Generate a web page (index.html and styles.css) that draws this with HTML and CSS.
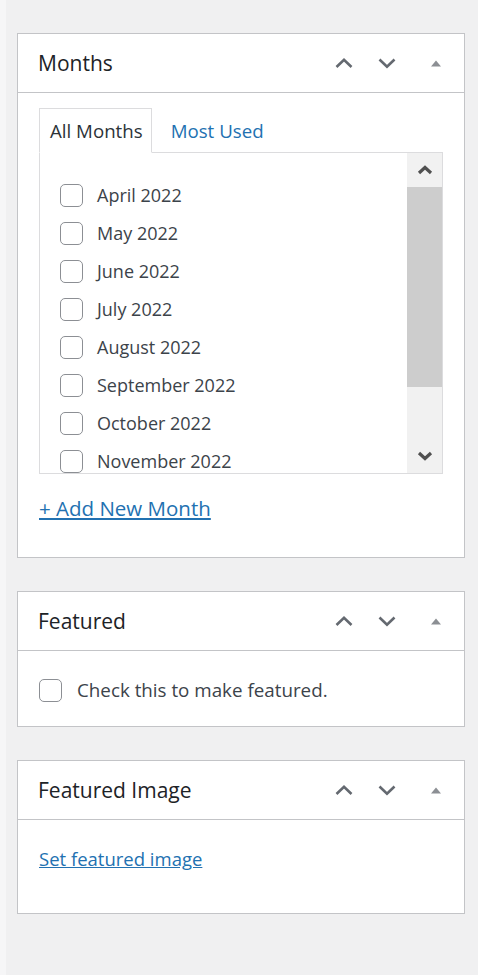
FILE: index.html
```html
<!DOCTYPE html>
<html lang="en">
<head>
<meta charset="utf-8">
<title>Edit Post – Sidebar</title>
<link rel="stylesheet" href="styles.css">
</head>
<body>
<div class="sidebar">

  <section class="postbox">
    <div class="postbox-header">
      <h2 class="hndle">Months</h2>
      <div class="handle-actions">
        <button class="handle-btn" type="button" aria-label="Move up">
          <svg class="chev" viewBox="0 0 20 12" width="20" height="12"><polyline points="2.5,10 10,2.8 17.5,10"/></svg>
        </button>
        <button class="handle-btn" type="button" aria-label="Move down">
          <svg class="chev" viewBox="0 0 20 12" width="20" height="12"><polyline points="2.5,2.5 10,9.7 17.5,2.5"/></svg>
        </button>
        <button class="handle-btn toggle" type="button" aria-label="Toggle panel">
          <svg class="tri" viewBox="0 0 12 8" width="12" height="8"><polygon points="1,7.5 6,1.5 11,7.5"/></svg>
        </button>
      </div>
    </div>
    <div class="inside">
      <ul class="tabs">
        <li class="tab active">All Months</li>
        <li class="tab"><a href="#">Most Used</a></li>
      </ul>
      <div class="tab-panel">
        <ul class="checklist">
          <li><label><input type="checkbox"><span>April 2022</span></label></li>
          <li><label><input type="checkbox"><span>May 2022</span></label></li>
          <li><label><input type="checkbox"><span>June 2022</span></label></li>
          <li><label><input type="checkbox"><span>July 2022</span></label></li>
          <li><label><input type="checkbox"><span>August 2022</span></label></li>
          <li><label><input type="checkbox"><span>September 2022</span></label></li>
          <li><label><input type="checkbox"><span>October 2022</span></label></li>
          <li><label><input type="checkbox"><span>November 2022</span></label></li>
        </ul>
        <div class="scrollbar" aria-hidden="true">
          <span class="sb-btn"><svg viewBox="0 0 16 10" width="16" height="10"><polyline points="2,8 8,2.5 14,8"/></svg></span>
          <span class="sb-thumb"></span>
          <span class="sb-track"></span>
          <span class="sb-btn"><svg viewBox="0 0 16 10" width="16" height="10"><polyline points="2,2 8,7.5 14,2"/></svg></span>
        </div>
      </div>
      <p class="add-row"><a href="#">+ Add New Month</a></p>
    </div>
  </section>

  <section class="postbox">
    <div class="postbox-header">
      <h2 class="hndle">Featured</h2>
      <div class="handle-actions">
        <button class="handle-btn" type="button" aria-label="Move up">
          <svg class="chev" viewBox="0 0 20 12" width="20" height="12"><polyline points="2.5,10 10,2.8 17.5,10"/></svg>
        </button>
        <button class="handle-btn" type="button" aria-label="Move down">
          <svg class="chev" viewBox="0 0 20 12" width="20" height="12"><polyline points="2.5,2.5 10,9.7 17.5,2.5"/></svg>
        </button>
        <button class="handle-btn toggle" type="button" aria-label="Toggle panel">
          <svg class="tri" viewBox="0 0 12 8" width="12" height="8"><polygon points="1,7.5 6,1.5 11,7.5"/></svg>
        </button>
      </div>
    </div>
    <div class="inside featured-inside">
      <label class="featured-row"><input type="checkbox"><span>Check this to make featured.</span></label>
    </div>
  </section>

  <section class="postbox">
    <div class="postbox-header">
      <h2 class="hndle">Featured Image</h2>
      <div class="handle-actions">
        <button class="handle-btn" type="button" aria-label="Move up">
          <svg class="chev" viewBox="0 0 20 12" width="20" height="12"><polyline points="2.5,10 10,2.8 17.5,10"/></svg>
        </button>
        <button class="handle-btn" type="button" aria-label="Move down">
          <svg class="chev" viewBox="0 0 20 12" width="20" height="12"><polyline points="2.5,2.5 10,9.7 17.5,2.5"/></svg>
        </button>
        <button class="handle-btn toggle" type="button" aria-label="Toggle panel">
          <svg class="tri" viewBox="0 0 12 8" width="12" height="8"><polygon points="1,7.5 6,1.5 11,7.5"/></svg>
        </button>
      </div>
    </div>
    <div class="inside image-inside">
      <p class="image-row"><a href="#">Set featured image</a></p>
    </div>
  </section>

</div>
</body>
</html>
```

FILE: styles.css
```css
* {
  box-sizing: border-box;
}

html,
body {
  margin: 0;
  padding: 0;
}

body {
  background: #f0f0f1;
  font-family: "Open Sans", "Noto Sans", "DejaVu Sans", sans-serif;
  color: #3c434a;
}

a {
  color: #2271b1;
}

/* Sidebar column */
.sidebar {
  min-height: 975px;
  border-left: 6px solid #f6f6f7;
  padding: 33px 13px 0 11px;
}

/* Meta box */
.postbox {
  background: #fff;
  border: 1px solid #c3c4c7;
  margin-bottom: 33px;
}

.postbox-header {
  display: flex;
  align-items: center;
  height: 59px;
  border-bottom: 1px solid #c3c4c7;
}

.hndle {
  flex: 1;
  margin: 0;
  padding-left: 20px;
  font-size: 21px;
  font-weight: 400;
  color: #1d2327;
}

.handle-actions {
  display: flex;
  align-items: center;
  padding-right: 7px;
}

.handle-btn {
  width: 43px;
  height: 58px;
  padding: 0;
  border: 0;
  background: none;
  display: flex;
  align-items: center;
  justify-content: center;
}

.handle-btn.toggle {
  margin-left: 6px;
}

.chev polyline {
  fill: none;
  stroke: #646970;
  stroke-width: 2.6;
}

.tri polygon {
  fill: #8c8f94;
}

.inside {
  padding: 15px 21px 37px;
}

/* Tabs */
.tabs {
  list-style: none;
  margin: 0 0 -1px;
  padding: 0;
  display: flex;
  align-items: flex-end;
}

.tab {
  height: 45px;
  line-height: 43px;
  font-size: 18.7px;
  padding: 0 0 0 18px;
  border: 1px solid transparent;
}

.tab a {
  text-decoration: none;
}

.tab.active {
  position: relative;
  z-index: 1;
  padding: 0 8px 0 10px;
  color: #2c3338;
  background: #fff;
  border-color: #dcdcde;
  border-bottom-color: #fff;
}

.tab-panel {
  display: flex;
  height: 322px;
  border: 1px solid #dcdcde;
  background: #fff;
  overflow: hidden;
}

.checklist {
  flex: 1;
  list-style: none;
  margin: 0;
  padding: 23px 0 0 20px;
  overflow: hidden;
}

.checklist li {
  height: 38px;
  display: flex;
  align-items: center;
}

.checklist label,
.featured-row {
  display: flex;
  align-items: center;
  gap: 14px;
  font-size: 18px;
}

input[type="checkbox"] {
  appearance: none;
  -webkit-appearance: none;
  flex: none;
  width: 23px;
  height: 23px;
  margin: 0;
  border: 1.5px solid #8c8f94;
  border-radius: 5px;
  background: #fff;
}

/* Panel scrollbar */
.scrollbar {
  flex: none;
  width: 35px;
  display: flex;
  flex-direction: column;
  background: #f1f1f1;
}

.sb-btn {
  height: 34px;
  display: flex;
  align-items: center;
  justify-content: center;
}

.sb-btn polyline {
  fill: none;
  stroke: #505050;
  stroke-width: 3.2;
}

.sb-thumb {
  height: 200px;
  background: #cdcdcd;
}

.sb-track {
  flex: 1;
}

.add-row {
  margin: 22px 0 0;
  line-height: 24px;
  font-size: 20.5px;
}

/* Featured */
.featured-inside {
  padding: 27px 21px 24px;
}

.featured-row {
  height: 24px;
  gap: 15px;
  font-size: 18.8px;
}

/* Featured image */
.image-inside {
  padding: 27px 21px 42px;
}

.image-row {
  margin: 0;
  line-height: 24px;
  font-size: 18.5px;
}
```
